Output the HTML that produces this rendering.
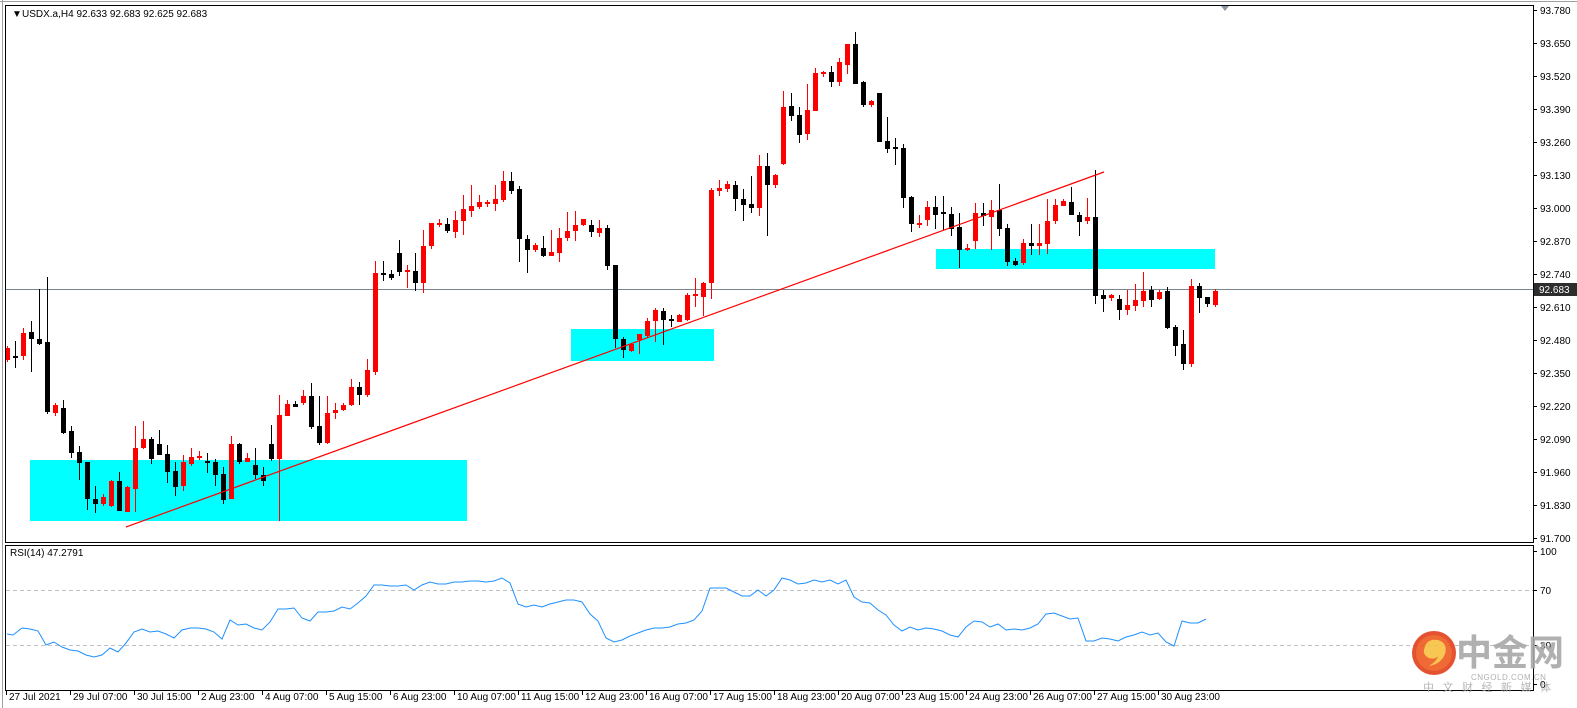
<!DOCTYPE html>
<html><head><meta charset="utf-8"><style>
html,body{margin:0;padding:0;background:#fff;width:1577px;height:708px;overflow:hidden}
svg{display:block}
text{font-family:"Liberation Sans","Noto Sans CJK SC",sans-serif}
</style></head><body>
<svg id="s" width="1577" height="708" xmlns="http://www.w3.org/2000/svg">
<rect x="0" y="0" width="1577" height="708" fill="#fff"/>
<line x1="0" y1="1.5" x2="1577" y2="1.5" stroke="#a0a0a0"/>
<line x1="2.5" y1="0" x2="2.5" y2="708" stroke="#a0a0a0"/>
<g id="boxes">
<rect x="30" y="460" width="437" height="61" fill="#00ffff"/>
<rect x="571" y="329" width="143" height="32" fill="#00ffff"/>
<rect x="936" y="249" width="279" height="20" fill="#00ffff"/>
</g>
<line x1="6" y1="289.5" x2="1533" y2="289.5" stroke="#7a8591" stroke-width="1"/>
<g id="candles"></g>
<line x1="126" y1="527" x2="1104" y2="172" stroke="#ff0000" stroke-width="1.2"/>
<!-- frames -->
<rect x="5.5" y="5.5" width="1528" height="537" fill="none" stroke="#000"/>
<rect x="5.5" y="545.5" width="1528" height="145" fill="none" stroke="#000"/>
<polygon points="1221,6 1229,6 1225,11" fill="#8a96a0"/>
<text x="12" y="17" font-size="10" fill="#000">▼</text>
<text x="22" y="17" font-size="10" fill="#000">USDX.a,H4  92.633 92.683 92.625 92.683</text>
<text x="10" y="556" font-size="10" fill="#000">RSI(14) 47.2791</text>
<line x1="6" y1="590.5" x2="1533" y2="590.5" stroke="#c0c0c0" stroke-dasharray="4,3"/>
<line x1="6" y1="645.5" x2="1533" y2="645.5" stroke="#c0c0c0" stroke-dasharray="4,3"/>
<polyline id="rsi" fill="none" stroke="#1e90ff" stroke-width="1"/>
<g id="axis" font-size="10" fill="#000"></g>
<rect x="1534" y="283" width="43" height="13" fill="#2d2d2d"/>
<text x="1539" y="293" font-size="10" fill="#fff">92.683</text>
<!-- logo -->
<g opacity="0.9">
<circle cx="1434" cy="653" r="22" fill="#e2401c"/>
<circle cx="1434" cy="653" r="18" fill="#ee5a20"/>
<path d="M1424 650 q2 -12 14 -10 q10 3 7 14 q-4 10 -16 12 q8 -5 9 -10 q-3 4 -9 2 q-6 -3 -5 -8z" fill="#f8c040"/>
<text x="1456" y="665" font-size="36" font-weight="bold" fill="#a8a8a8" font-family="Noto Sans CJK SC, sans-serif">中金网</text>
<text x="1471" y="680" font-size="8" fill="#a8a8a8" letter-spacing="0.5">CNGOLD.COM.CN</text>
<text x="1423" y="691" font-size="11" fill="#b0b0b0" letter-spacing="8.5" font-family="Noto Sans CJK SC, sans-serif">中文财经新媒体</text>
</g>
</svg>
<script>
var D=[[360,348,346,362],[357,357,341,368],[356,333,328,360],[332,339,321,372],[339,344,289,345],[342,412,277,414],[413,405,403,416],[408,433,400,434],[431,453,426,458],[452,463,446,480],[462,499,462,510],[499,504,486,513],[504,497,494,506],[506,481,480,507],[481,511,472,511],[512,487,486,512],[489,448,426,512],[448,439,421,449],[439,459,437,464],[444,455,430,455],[454,472,445,483],[471,487,462,496],[486,462,455,491],[464,457,448,466],[457,457,451,460],[462,462,453,473],[462,475,459,486],[474,500,467,504],[499,444,436,499],[444,462,443,464],[462,458,453,462],[465,475,448,479],[475,481,467,486],[444,459,425,461],[459,415,395,521],[416,404,400,416],[404,407,401,407],
[403,396,390,405],[396,427,383,429],[426,443,396,445],[443,413,396,444],[413,410,403,419],[410,405,403,411],[405,387,379,406],[387,395,382,405],[395,370,359,397],[372,273,261,375],[274,274,261,281],[274,278,270,280],[253,272,240,276],[271,271,265,288],[271,283,253,291],[283,246,230,293],[246,223,223,249],[224,224,219,227],[224,231,218,233],[232,220,211,238],[221,209,195,235],[211,206,185,217],[207,202,195,209],[203,203,200,207],[204,199,185,211],[200,181,171,202],[181,191,172,194],[189,239,186,262],[239,250,235,273],[250,245,243,252],[248,256,236,257],[256,252,230,256],[253,238,228,262],[238,231,212,241],[231,225,211,241],[225,219,219,226],[225,232,220,237],[233,228,220,237],[228,266,225,270],[265,339,265,348],[339,350,337,358],[351,344,343,352],[340,334,334,354],[336,321,318,338],[321,310,308,342],[311,320,308,345],[320,320,315,327],[322,315,314,322],[320,295,293,321],[295,295,278,307],[297,283,282,316],[283,190,188,299],[191,188,180,196],[189,184,181,192],[185,199,181,211],[199,205,189,221],[204,208,176,213],[208,166,155,216],[166,185,153,236],[185,175,174,188],[164,107,91,165],[106,116,93,121],[115,135,107,143],[134,110,84,140],[111,73,68,111],[73,73,71,77],[72,82,66,87],[82,62,58,86],[65,44,44,74],[44,84,32,84],[82,105,81,107],[105,101,100,107],[93,142,93,142],[141,149,117,153],[148,148,138,165],[148,198,144,208],[197,224,196,232],[224,224,215,228],[220,207,201,226],[207,215,196,229],[213,213,196,230],[214,229,207,236],[227,250,213,268],[249,249,244,251],[241,213,203,249],[213,216,203,226],[217,210,200,250],[210,229,184,236],[228,262,224,266],[261,265,258,266],[263,243,239,265],[243,246,224,255],[246,243,224,255],[244,221,199,254],[221,205,199,224],[206,201,199,206],[202,215,187,215],[215,222,212,236],[221,217,198,224],[217,296,170,304],[295,299,290,312],[298,295,294,301],[299,310,295,320],[310,305,290,315],[306,300,284,311],[301,291,272,307],[290,300,286,307],[299,292,290,300],[291,328,287,329],[327,346,325,356],[344,364,330,370],[364,286,279,367],[286,298,283,313],[297,304,297,307],[305,291,289,307]];
var NS="http://www.w3.org/2000/svg",g=document.getElementById("candles"),h="";
D.forEach(function(c,i){var x=7+8*i,o=c[0],cl=c[1],col=cl<o?"#ff0000":(cl>o?"#000":(i%2?"#000":"#ff0000"));
var t=Math.min(o,cl),b=Math.max(o,cl);if(b-t<2){t-=1;b+=1;}
h+='<rect x="'+x+'" y="'+c[2]+'" width="1" height="'+(c[3]-c[2])+'" fill="'+col+'"/>';
h+='<rect x="'+(x-2)+'" y="'+t+'" width="5" height="'+(b-t)+'" fill="'+col+'"/>';});
g.innerHTML=h;
var R=[[7,634],[13,635],[22,628],[30,629],[38,631],[46,645],[54,642],[62,647],[70,650],[78,651],[86,655],[94,657],[102,655],[110,648],[118,652],[126,643],[134,632],[142,629],[150,632],[158,631],[166,634],[174,638],[182,630],[190,628],[198,628],[206,629],[214,632],[222,639],[230,620],[238,625],[246,624],[254,628],[262,630],[270,622],[278,609],[286,609],[294,608],[302,618],[310,621],[318,612],[326,612],[334,611],[342,607],[350,609],[358,603],[366,596],[374,585],[382,585],[390,586],[398,586],[406,585],[414,590],[422,585],[430,582],[438,584],[446,584],[454,582],[462,582],[470,581],[478,581],[486,582],[494,581],[502,578],[510,583],[518,604],[526,607],[534,605],[542,607],[550,604],[558,602],[566,600],[574,600],[582,602],[590,614],[598,621],[606,638],[614,642],[622,640],[630,636],[638,633],[646,630],[654,628],[662,628],[670,627],[678,624],[686,623],[694,620],[702,611],[710,588],[718,588],[726,588],[734,592],[742,596],[750,596],[758,590],[766,596],[774,590],[782,578],[790,580],[798,584],[806,583],[814,580],[822,582],[830,580],[838,584],[846,580],[854,597],[862,602],[870,603],[878,610],[886,615],[894,625],[902,631],[910,627],[918,630],[926,628],[934,629],[942,631],[950,635],[958,637],[966,627],[974,621],[982,622],[990,627],[998,624],[1006,630],[1014,629],[1022,630],[1030,628],[1038,624],[1046,614],[1054,613],[1062,616],[1070,619],[1078,618],[1086,641],[1094,641],[1102,638],[1110,639],[1118,641],[1126,637],[1134,635],[1142,632],[1150,635],[1158,633],[1166,642],[1174,646],[1182,621],[1190,623],[1198,623],[1206,619]];
document.getElementById("rsi").setAttribute("points",R.map(function(p){return p.join(",")}).join(" "));
var a="",lv=["93.780","93.650","93.520","93.390","93.260","93.130","93.000","92.870","92.740","92.610","92.480","92.350","92.220","92.090","91.960","91.830","91.700"];
lv.forEach(function(v,i){var y=10+i*33;a+='<line x1="1533" y1="'+(y+0.5)+'" x2="1537" y2="'+(y+0.5)+'" stroke="#000"/><text x="1540" y="'+(y+4)+'">'+v+'</text>';});
[["100",551],["70",590],["30",645],["0",684]].forEach(function(p){a+='<line x1="1533" y1="'+(p[1]+0.5)+'" x2="1537" y2="'+(p[1]+0.5)+'" stroke="#000"/><text x="1540" y="'+(p[1]+4)+'">'+p[0]+'</text>';});
var L=["27 Jul 2021","29 Jul 07:00","30 Jul 15:00","2 Aug 23:00","4 Aug 07:00","5 Aug 15:00","6 Aug 23:00","10 Aug 07:00","11 Aug 15:00","12 Aug 23:00","16 Aug 07:00","17 Aug 15:00","18 Aug 23:00","20 Aug 07:00","23 Aug 15:00","24 Aug 23:00","26 Aug 07:00","27 Aug 15:00","30 Aug 23:00"];
L.forEach(function(t,i){var x=6+64*i;a+='<line x1="'+(x+0.5)+'" y1="691" x2="'+(x+0.5)+'" y2="695" stroke="#000"/><text x="'+(x+3)+'" y="700">'+t+'</text>';});
document.getElementById("axis").innerHTML=a;
</script>
</body></html>
